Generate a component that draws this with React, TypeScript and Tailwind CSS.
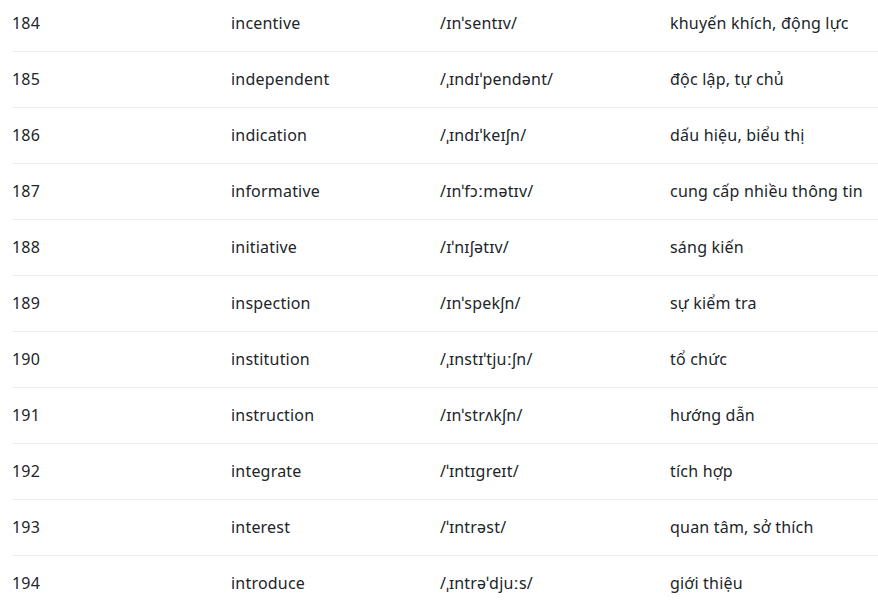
import React from "react";

const rows: [string, string, string, string][] = [
  ["184", "incentive", "/ɪnˈsentɪv/", "khuyến khích, động lực"],
  ["185", "independent", "/ˌɪndɪˈpendənt/", "độc lập, tự chủ"],
  ["186", "indication", "/ˌɪndɪˈkeɪʃn/", "dấu hiệu, biểu thị"],
  ["187", "informative", "/ɪnˈfɔːmətɪv/", "cung cấp nhiều thông tin"],
  ["188", "initiative", "/ɪˈnɪʃətɪv/", "sáng kiến"],
  ["189", "inspection", "/ɪnˈspekʃn/", "sự kiểm tra"],
  ["190", "institution", "/ˌɪnstɪˈtjuːʃn/", "tổ chức"],
  ["191", "instruction", "/ɪnˈstrʌkʃn/", "hướng dẫn"],
  ["192", "integrate", "/ˈɪntɪɡreɪt/", "tích hợp"],
  ["193", "interest", "/ˈɪntrəst/", "quan tâm, sở thích"],
  ["194", "introduce", "/ˌɪntrəˈdjuːs/", "giới thiệu"],
];

export default function App() {
  return (
    <div
      className="w-[878px] h-[605px] overflow-hidden bg-white text-[16px] text-[#212529] tracking-[0.2px]"
      style={{ fontFamily: '"Noto Sans", "Open Sans", sans-serif' }}
    >
      <div className="-mt-[4px] ml-3 w-[866px]">
        {rows.map((r, i) => (
          <div
            key={i}
            className="grid grid-cols-[219px_209px_230px_1fr] h-[56px] items-center border-b border-[#eeeeee]"
          >
            <div className="-mt-[2px]">{r[0]}</div>
            <div className="-mt-[2px]">{r[1]}</div>
            <div className="-mt-[2px]">{r[2]}</div>
            <div className="-mt-[2px] whitespace-nowrap">{r[3]}</div>
          </div>
        ))}
      </div>
    </div>
  );
}
